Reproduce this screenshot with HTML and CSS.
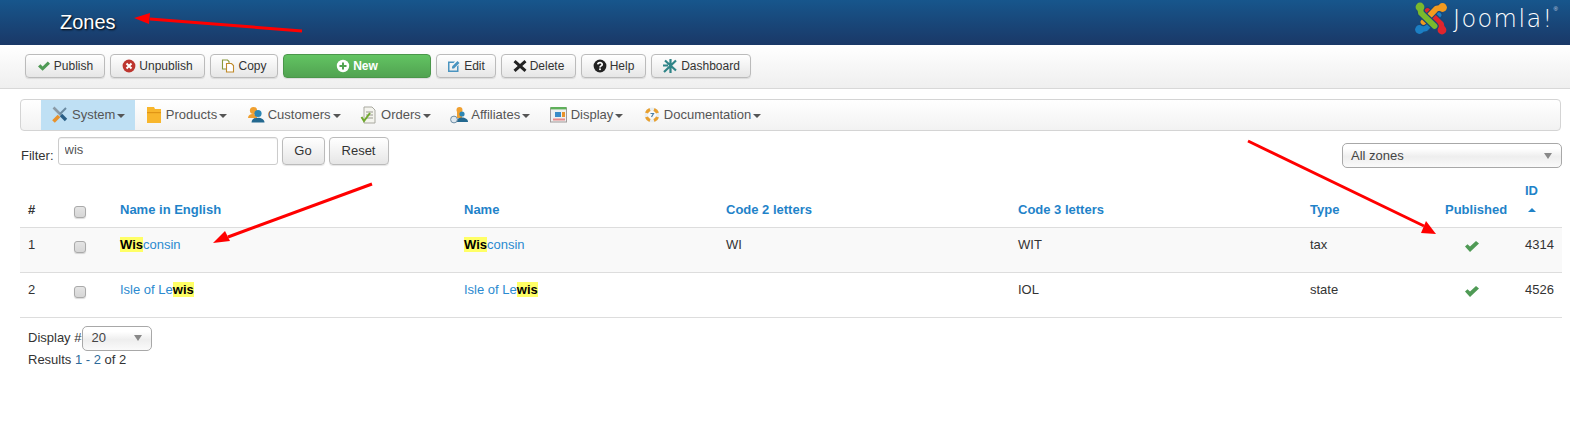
FILE: index.html
```html
<!DOCTYPE html>
<html lang="en">
<head>
<meta charset="utf-8">
<title>Zones</title>
<link rel="stylesheet" href="styles.css">
</head>
<body>
<header class="topbar">
  <h1 class="title">Zones</h1>
  <div class="logo">
    <svg class="logo-mark" width="44" height="36" viewBox="0 0 44 36" fill="none" stroke-linecap="round" stroke-linejoin="round">
      <g transform="rotate(270 22 18.5)"><path d="M11 7 L12 13 L25.5 26" stroke="#1a4777" stroke-width="8"/><path d="M11 7 L12 13 L25.5 26" stroke="#1c7fc4" stroke-width="5.8"/><circle cx="11" cy="7" r="4.4" fill="#1c7fc4"/></g>
      <g transform="rotate(180 22 18.5)"><path d="M11 7 L12 13 L25.5 26" stroke="#1a4777" stroke-width="8"/><path d="M11 7 L12 13 L25.5 26" stroke="#e0252d" stroke-width="5.8"/><circle cx="11" cy="7" r="4.4" fill="#e0252d"/></g>
      <g transform="rotate(90 22 18.5)"><path d="M11 7 L12 13 L25.5 26" stroke="#1a4777" stroke-width="8"/><path d="M11 7 L12 13 L25.5 26" stroke="#f29a1f" stroke-width="5.8"/><circle cx="11" cy="7" r="4.4" fill="#f29a1f"/></g>
      <g><path d="M11 7 L12 13 L25.5 26" stroke="#1a4777" stroke-width="8"/><path d="M11 7 L12 13 L25.5 26" stroke="#7ab92d" stroke-width="5.8"/><circle cx="11" cy="7" r="4.4" fill="#7ab92d"/></g>
    </svg>
    <span class="logo-text">Joomla!</span><sup class="logo-reg">®</sup>
  </div>
</header>

<nav class="toolbar">
  <button class="btn w-80"><svg class="ico" viewBox="0 0 14 14"><path d="M1 7.5 L3.4 5.2 L5.6 7.4 L10.8 2.5 L13 4.8 L5.6 11.8 Z" fill="#4f9a55"/></svg>Publish</button>
  <button class="btn w-95"><svg class="ico" viewBox="0 0 14 14"><circle cx="7" cy="7" r="6.4" fill="#bd362f"/><path d="M4.5 4.5 L9.5 9.5 M9.5 4.5 L4.5 9.5" stroke="#fff" stroke-width="2"/></svg>Unpublish</button>
  <button class="btn w-68"><svg class="ico" viewBox="0 0 14 14" fill="#fff" stroke-width="1.1"><path d="M1.5 1 H6.5 L8 2.5 V10 H1.5 Z" stroke="#8a9a3a"/><path d="M5.5 4.5 H10.5 L12.5 6.5 V13 H5.5 Z" stroke="#c08a2a"/></svg>Copy</button>
  <button class="btn btn-new"><svg class="ico" viewBox="0 0 14 14"><circle cx="7" cy="7" r="6.2" fill="#fff"/><path d="M7 3.5 V10.5 M3.5 7 H10.5" stroke="#51a351" stroke-width="2"/></svg>New</button>
  <button class="btn w-60"><svg class="ico" viewBox="0 0 14 14"><path d="M1 2.5 H8 L6.5 4 H2.5 V11.5 H10 V7.5 L11.5 6 V13 H1 Z" fill="#4a94c0"/><path d="M5 7.5 L10.5 2 L12.5 4 L7 9.5 L5 9.5 Z" fill="#4a94c0"/></svg>Edit</button>
  <button class="btn w-75"><svg class="ico" viewBox="0 0 14 14"><path d="M2.5 1 L7 5 L11.5 1 L13.5 3.2 L9.3 7 L13.5 10.8 L11.5 13 L7 9 L2.5 13 L.5 10.8 L4.7 7 L.5 3.2 Z" fill="#222"/></svg>Delete</button>
  <button class="btn w-65"><svg class="ico" viewBox="0 0 14 14"><circle cx="7" cy="7" r="6.4" fill="#222"/><path d="M4.8 5.4 C4.9 3.1 9.2 3.1 9.2 5.4 C9.2 7 7 6.8 7 8.4" fill="none" stroke="#fff" stroke-width="1.7"/><rect x="6.1" y="9.4" width="1.8" height="1.7" fill="#fff"/></svg>Help</button>
  <button class="btn w-100"><svg class="ico ico-lg" viewBox="0 0 16 16"><path d="M8.5 1 V15 M3 2.5 L14 12.5 M14 2.5 L2 14 M1 7.5 H6" stroke="#2f8487" stroke-width="2.2" fill="none"/></svg>Dashboard</button>
</nav>

<div class="content">
  <ul class="menu">
    <li class="menu-item is-active"><svg class="mico" viewBox="0 0 18 18"><path d="M2.5 1.5 L10 9" stroke="#8a9aa6" stroke-width="2.6"/><path d="M10 9 L15 14" stroke="#2a5f86" stroke-width="3.4"/><path d="M15 2 L9 8" stroke="#6a8aa0" stroke-width="2"/><path d="M2.5 15.5 L8 10" stroke="#e8922c" stroke-width="3.8"/></svg>System<i class="caret"></i></li>
    <li class="menu-item"><svg class="mico" viewBox="0 0 18 18"><path d="M2 1 H9 L10 3 H16 V17 H2 Z" fill="#f8b62c"/><rect x="2" y="6" width="14" height="1.2" fill="#e09516"/></svg>Products<i class="caret"></i></li>
    <li class="menu-item"><svg class="mico" viewBox="0 0 18 18"><circle cx="6.5" cy="4.5" r="3.6" fill="#f0a030"/><path d="M1 12 C1 6.5 10 6.5 10 12 Z" fill="#f0a030"/><circle cx="11" cy="7.5" r="3.6" fill="#2c86b4"/><path d="M4.5 16.5 C4.5 10 17.5 10 17.5 16.5 Z" fill="#23688f"/></svg>Customers<i class="caret"></i></li>
    <li class="menu-item"><svg class="mico" viewBox="0 0 18 18"><path d="M4 1 H12 L15 4 V17 H4 Z" fill="#f4f4ee" stroke="#a9a9a0"/><path d="M6 6 H13 M6 9 H13 M6 12 H13" stroke="#9a9a90"/><path d="M1.5 11 L4 15 L10 7" fill="none" stroke="#6fa82e" stroke-width="2"/></svg>Orders<i class="caret"></i></li>
    <li class="menu-item"><svg class="mico" viewBox="0 0 18 18"><circle cx="9.5" cy="4" r="3" fill="#f0a030"/><path d="M7 6 H12 V12 H7 Z" fill="#f0a030"/><circle cx="12" cy="8" r="2.6" fill="#2c86b4"/><path d="M6 16 C6 10 18 10 18 16 Z" fill="#23688f"/><circle cx="4" cy="13.5" r="3.4" fill="#dfe8ef" stroke="#6d8ca3"/></svg>Affiliates<i class="caret"></i></li>
    <li class="menu-item"><svg class="mico" viewBox="0 0 18 18"><rect x=".5" y="2" width="16" height="14" fill="#eef0f0" stroke="#a09a9a"/><rect x=".5" y="1" width="16" height="2.4" fill="#5fb05a"/><rect x="5" y="6" width="6" height="5" fill="#3a8cc8"/><rect x="12" y="6" width="3" height="5" fill="#e8922c"/><rect x="3" y="12.5" width="12" height="2" fill="#e88a8a"/></svg>Display<i class="caret"></i></li>
    <li class="menu-item"><svg class="mico" viewBox="0 0 18 18" fill="none"><circle cx="9" cy="9" r="6" stroke="#e8eef2" stroke-width="3"/><g stroke="#e8a030" stroke-width="3.2"><path d="M3.5 7 A6 6 0 0 1 7 3.5"/><path d="M11 3.5 A6 6 0 0 1 14.5 7"/><path d="M14.5 11 A6 6 0 0 1 11 14.5"/><path d="M7 14.5 A6 6 0 0 1 3.5 11"/></g><path d="M7.5 7.5 H10.5 L8.5 11" stroke="#4a7ea6" stroke-width="1.2"/></svg>Documentation<i class="caret"></i></li>
  </ul>

  <div class="filter-row">
    <form class="filter">
      <label class="filter-label">Filter:</label>
      <input class="filter-input" type="text" value="wis">
      <button class="btn-plain" type="button">Go</button>
      <button class="btn-plain" type="button">Reset</button>
    </form>
    <div class="select select-zones"><span>All zones</span><i class="select-arrow"></i></div>
  </div>

  <table class="grid">
    <thead>
      <tr>
        <th class="col-num plain">#</th>
        <th class="col-check"><span class="check"></span></th>
        <th class="col-english">Name in English</th>
        <th class="col-name">Name</th>
        <th class="col-code2">Code 2 letters</th>
        <th class="col-code3">Code 3 letters</th>
        <th class="col-type">Type</th>
        <th class="col-pub">Published</th>
        <th class="col-id">ID<i class="sort"></i></th>
      </tr>
    </thead>
    <tbody>
      <tr class="odd">
        <td>1</td>
        <td><span class="check"></span></td>
        <td><a class="link"><mark>Wis</mark>consin</a></td>
        <td><a class="link"><mark>Wis</mark>consin</a></td>
        <td>WI</td>
        <td>WIT</td>
        <td>tax</td>
        <td class="cell-pub"><svg class="tick" viewBox="0 0 14 11"><path d="M0 5.6 L2.5 3.2 L5 5.6 L11 0 L14 2.6 L5 11 Z" fill="#4f9a55"/></svg></td>
        <td>4314</td>
      </tr>
      <tr>
        <td>2</td>
        <td><span class="check"></span></td>
        <td><a class="link">Isle of Le<mark>wis</mark></a></td>
        <td><a class="link">Isle of Le<mark>wis</mark></a></td>
        <td></td>
        <td>IOL</td>
        <td>state</td>
        <td class="cell-pub"><svg class="tick" viewBox="0 0 14 11"><path d="M0 5.6 L2.5 3.2 L5 5.6 L11 0 L14 2.6 L5 11 Z" fill="#4f9a55"/></svg></td>
        <td>4526</td>
      </tr>
    </tbody>
  </table>

  <div class="pager">
    <div class="pager-line"><span>Display #</span><div class="select select-limit"><span>20</span><i class="select-arrow"></i></div></div>
    <div class="results">Results <span class="results-range">1 - 2</span> of 2</div>
  </div>
</div>

<svg class="arrows" width="1570" height="440" viewBox="0 0 1570 440">
  <g stroke="#f00" stroke-width="3" fill="#f00">
    <path d="M302 31 L150 19" fill="none"/><path d="M134 18 L150 13 L149 24 Z" stroke="none"/>
    <path d="M372 184 L228 237" fill="none"/><path d="M213 243 L225 231 L230 241 Z" stroke="none"/>
    <path d="M1248 141 L1424 226" fill="none"/><path d="M1436 234 L1421 233 L1426 221 Z" stroke="none"/>
  </g>
</svg>
</body>
</html>
```
FILE: styles.css
```css
* { box-sizing: border-box; }
html, body { margin: 0; padding: 0; }
body {
  position: relative;
  width: 1570px;
  height: 440px;
  overflow: hidden;
  background: #fff;
  color: #333;
  font: 13px/18px "Liberation Sans", Arial, sans-serif;
}

.topbar {
  height: 45px;
  background: linear-gradient(#17568c, #1a3867);
  display: flex;
  justify-content: space-between;
  align-items: flex-start;
  padding: 0 12px 0 60px;
}
.title {
  margin: 0;
  color: #fff;
  font-size: 20px;
  font-weight: 400;
  line-height: 44px;
  text-shadow: 1px 1px 2px #000;
}
.logo { display: flex; align-items: flex-start; color: #fff; }
.logo-text { font: 200 24px/36px "DejaVu Sans", sans-serif; letter-spacing: 1.4px; margin-top: 1px; }
.logo-reg { font-size: 6px; line-height: 6px; margin-top: 6px; color: #cfd8e4; }

.toolbar {
  height: 44px;
  display: flex;
  gap: 5px;
  padding: 9px 0 0 25px;
  background: linear-gradient(#fff, #efefef);
  border-bottom: 1px solid #d8d8d8;
}
.btn, .btn-plain {
  font: inherit;
  color: #333;
  border: 1px solid #bbb;
  border-radius: 4px;
  background: linear-gradient(#fff, #e6e6e6);
  box-shadow: 0 1px 1px rgba(0,0,0,.1);
  padding: 0;
}
.btn {
  height: 24px;
  display: flex;
  align-items: center;
  justify-content: center;
  font-size: 12px;
}
.w-60 { width: 60px; }
.w-65 { width: 65px; }
.w-68 { width: 68px; }
.w-75 { width: 75px; }
.w-80 { width: 80px; }
.w-95 { width: 95px; }
.w-100 { width: 100px; }
.btn-new {
  width: 148px;
  color: #fff;
  font-weight: 700;
  background: linear-gradient(#62c462, #51a351);
  border-color: #4a964a;
}
.ico { width: 14px; height: 14px; margin-right: 3px; flex: none; }
.ico-lg { width: 16px; height: 16px; }

.content { padding: 10px 8px 0 20px; }

.menu {
  list-style: none;
  margin: 0 1px 0 0;
  height: 32px;
  padding: 0 0 0 20px;
  display: flex;
  border: 1px solid #d4d4d4;
  border-radius: 4px;
  background: linear-gradient(#fff, #f2f2f2);
}
.menu-item {
  display: flex;
  align-items: center;
  padding: 0 10px 0 9.5px;
  color: #555;
  height: 30px;
}
.menu-item.is-active { background: #bfe0f4; padding-left: 10px; }
.mico { width: 18px; height: 18px; margin-right: 3px; flex: none; }
.caret {
  margin-left: 2px;
  margin-top: 2px;
  border: 4px solid transparent;
  border-top-color: #555;
  border-bottom: 0;
}

.filter-row {
  display: flex;
  justify-content: space-between;
  padding-top: 6px;
  height: 49px;
}
.filter { display: flex; align-items: flex-start; margin: 0 0 0 1px; }
.filter-label { margin: 10px 4px 0 0; line-height: 18px; }
.filter-input {
  width: 220px;
  height: 28px;
  padding: 0 6px 3px;
  font: inherit;
  color: #555;
  border: 1px solid #ccc;
  border-radius: 3px;
  box-shadow: inset 0 1px 1px rgba(0,0,0,.07);
  outline: 0;
}
.btn-plain { height: 28px; margin-left: 4px; }
.filter-input + .btn-plain { width: 43px; }
.btn-plain + .btn-plain { width: 60px; }

.select {
  display: flex;
  align-items: center;
  justify-content: space-between;
  border: 1px solid #a8a8a8;
  border-radius: 5px;
  background: linear-gradient(#fff 20%, #eee 55%, #fafafa);
  color: #444;
  padding: 0 9px 0 8px;
}
.select-zones { width: 220px; height: 25px; margin-top: 6px; }
.select-limit { width: 70px; height: 25px; margin-left: 1px; }
.select-arrow {
  border: 4px solid transparent;
  border-top: 6px solid #888;
  border-bottom: 0;
}

.grid {
  width: 1542px;
  table-layout: fixed;
  border-collapse: collapse;
}
.grid th {
  height: 47px;
  padding: 0 0 8px 8px;
  text-align: left;
  vertical-align: bottom;
  font-weight: 700;
  color: #1f83c9;
}
.grid th.plain { color: #333; }
.col-num { width: 46px; }
.col-check { width: 46px; }
.col-english { width: 344px; }
.col-name { width: 262px; }
.col-code2 { width: 292px; }
.col-code3 { width: 292px; }
.col-type { width: 135px; }
.col-pub { width: 80px; }
.col-id { width: 45px; }
.grid td {
  height: 45px;
  padding: 8px 0 0 8px;
  vertical-align: top;
  border-top: 1px solid #ddd;
}
.grid tbody tr:last-child td { border-bottom: 1px solid #ddd; }
.odd td { background: #f9f9f9; }
.check {
  display: block;
  width: 12px;
  height: 12px;
  margin-top: 5px;
  border: 1px solid #aaa;
  border-radius: 3px;
  background: linear-gradient(#e4e4e4, #d6d6d6);
  box-shadow: 0 1px 1px rgba(0,0,0,.15);
}
.grid th .check { margin-bottom: 1px; }
.link { color: #2b8ad0; }
mark { background: #ffff66; color: #000; font-weight: 700; }
.grid .cell-pub { padding-left: 28px; }
.tick { display: block; width: 14px; height: 11px; margin-top: 5px; }
.sort {
  display: block;
  width: 0;
  margin: 8px 0 7px 3px;
  border: 4px solid transparent;
  border-bottom-color: #1f83c9;
  border-top: 0;
}

.pager { padding: 8px 0 0 8px; }
.pager-line { display: flex; align-items: center; }
.results-range { color: #2b6a9a; }

.arrows { position: absolute; left: 0; top: 0; pointer-events: none; }
```
